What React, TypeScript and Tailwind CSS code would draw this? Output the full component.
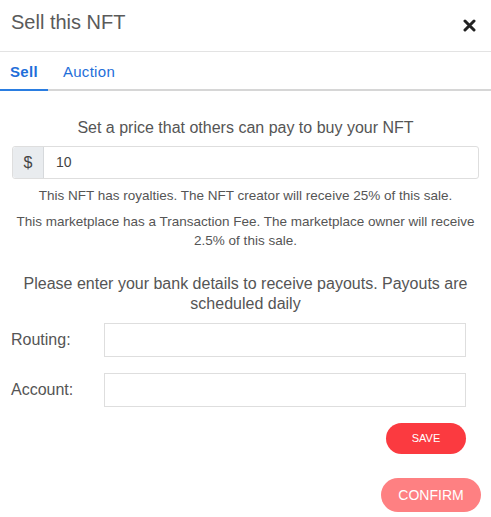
import React, { useState } from 'react';

const SellNftModal: React.FC = () => {
    const [tab, setTab] = useState<'sell' | 'auction'>('sell');
    const [price, setPrice] = useState('10');

    return (
        <div className="w-[491px] h-[517px] bg-white text-[#555] font-['Liberation_Sans',Arial,sans-serif]">
            {/* 헤더 */}
            <div className="flex items-start justify-between h-[52px] pl-[11px] pr-[15px] border-b border-[#e3e3e3]">
                <h2 className="mt-[12px] text-[20px] leading-none text-[#5a5a5a]">Sell this NFT</h2>
                <button className="mt-[19px]" aria-label="close">
                    <svg width="13" height="13" viewBox="0 0 13 13">
                        <path d="M2 2 L11 11 M11 2 L2 11" stroke="#222" strokeWidth="3" strokeLinecap="round" />
                    </svg>
                </button>
            </div>

            {/* 탭 */}
            <div className="flex h-[39px] border-b-2 border-[#d6d6d6]">
                <button
                    onClick={() => setTab('sell')}
                    className={`relative px-[10px] pt-[3px] text-[15px] tracking-[0.3px] text-[#1f6fd9] ${tab === 'sell' ? 'font-bold' : ''}`}
                >
                    Sell
                    {tab === 'sell' && <span className="absolute left-0 right-0 -bottom-[2px] h-[2px] bg-[#2a7de1]" />}
                </button>
                <button
                    onClick={() => setTab('auction')}
                    className={`relative px-[15px] pt-[3px] text-[15px] tracking-[0.3px] text-[#1f6fd9] ${tab === 'auction' ? 'font-bold' : ''}`}
                >
                    Auction
                    {tab === 'auction' && <span className="absolute left-0 right-0 -bottom-[2px] h-[2px] bg-[#2a7de1]" />}
                </button>
            </div>

            {/* 가격 */}
            <div className="px-[12px] pt-[27px]">
                <p className="text-center text-[16px] leading-[20px]">Set a price that others can pay to buy your NFT</p>
                <div className="flex h-[33px] mt-[8px] border border-[#dedede] rounded-[3px]">
                    <span className="flex items-center justify-center w-[31px] bg-[#e9ecef] border-r border-[#d6d9dc] text-[16px] text-[#444] rounded-l-[3px]">$</span>
                    <input
                        value={price}
                        onChange={(e) => setPrice(e.target.value)}
                        className="flex-1 pl-[12px] text-[14px] text-[#444] outline-none"
                    />
                </div>
                <p className="text-center text-[13.5px] leading-[19px] mt-[7px]">
                    This NFT has royalties. The NFT creator will receive 25% of this sale.
                </p>
                <p className="text-center text-[13.5px] leading-[19px] mt-[7px]">
                    This marketplace has a Transaction Fee. The marketplace owner will receive 2.5% of this sale.
                </p>
            </div>

            {/* 계좌 정보 */}
            <div className="px-[12px] pt-[24px]">
                <p className="text-center text-[16px] leading-[20px]">
                    Please enter your bank details to receive payouts. Payouts are scheduled daily
                </p>
            </div>
            <div className="pl-[11px] pr-[25px]">
                <div className="flex items-center mt-[9px]">
                    <label className="w-[93px] text-[16px]">Routing:</label>
                    <input className="flex-1 h-[34px] border border-[#dedede] outline-none px-2 text-[14px]" />
                </div>
                <div className="flex items-center mt-[16px]">
                    <label className="w-[93px] text-[16px]">Account:</label>
                    <input className="flex-1 h-[34px] border border-[#dedede] outline-none px-2 text-[14px]" />
                </div>
                <div className="flex justify-end mt-[16px]">
                    <button className="w-[80px] h-[31px] rounded-full bg-[#fb3a40] text-white text-[11px]">SAVE</button>
                </div>
            </div>

            {/* 확인 */}
            <div className="flex justify-end pr-[10px] mt-[24px]">
                <button className="w-[100px] h-[34px] rounded-full bg-[#fe8082] text-white text-[14px]">CONFIRM</button>
            </div>
        </div>
    );
};

export default function App() {
    return <SellNftModal />;
}
